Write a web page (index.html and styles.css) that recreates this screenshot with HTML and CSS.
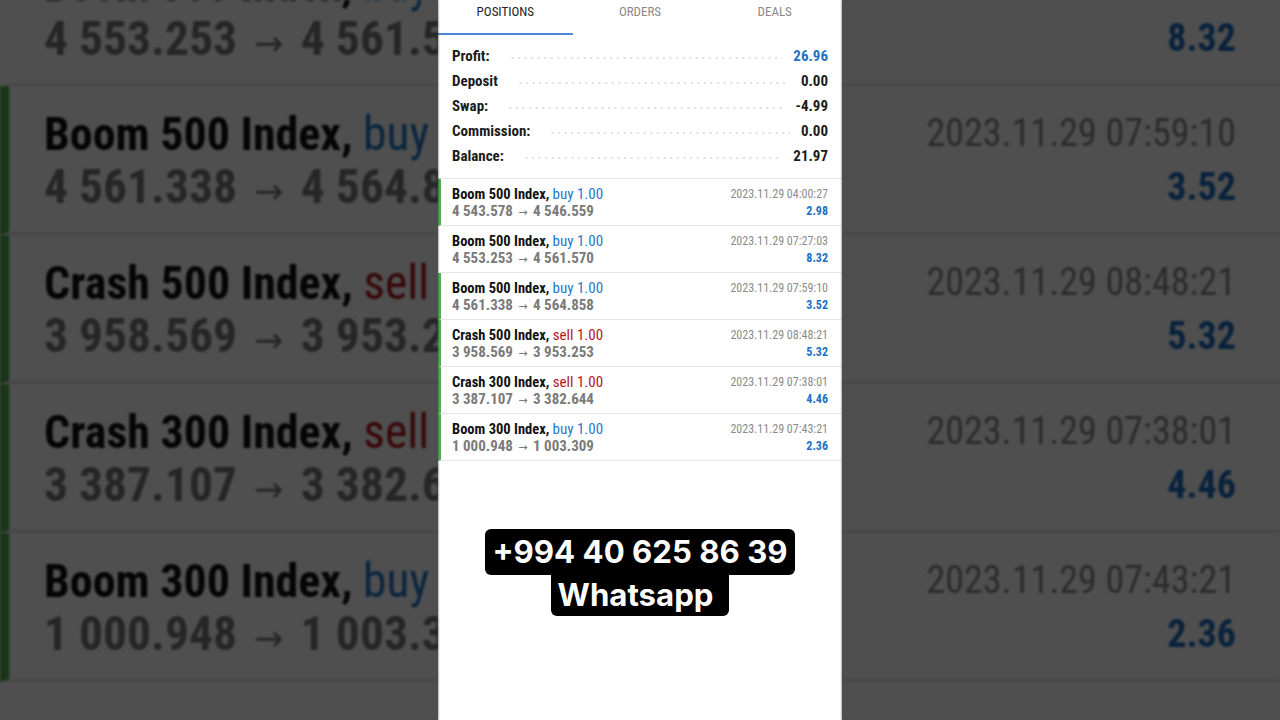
FILE: index.html
```html
<!DOCTYPE html>
<html lang="en">
<head>
<meta charset="utf-8">
<title>Positions</title>
<link rel="stylesheet" href="styles.css">
</head>
<body>
<div class="stage">
  <div class="side side-left" aria-hidden="true">
    <div class="screen bg-screen">
      <div class="bg-spacer"></div>
      <div class="deal"><div class="left"><div class="title">Boom 500 Index, <span class="buy">buy 1.00</span></div><div class="prices">4 553.253 <span class="arr">→</span> 4 561.570</div></div><div class="right"><div class="date">2023.11.29 07:27:03</div><div class="pl">8.32</div></div></div>
      <div class="deal green"><div class="left"><div class="title">Boom 500 Index, <span class="buy">buy 1.00</span></div><div class="prices">4 561.338 <span class="arr">→</span> 4 564.858</div></div><div class="right"><div class="date">2023.11.29 07:59:10</div><div class="pl">3.52</div></div></div>
      <div class="deal green"><div class="left"><div class="title">Crash 500 Index, <span class="sell">sell 1.00</span></div><div class="prices">3 958.569 <span class="arr">→</span> 3 953.253</div></div><div class="right"><div class="date">2023.11.29 08:48:21</div><div class="pl">5.32</div></div></div>
      <div class="deal green"><div class="left"><div class="title">Crash 300 Index, <span class="sell">sell 1.00</span></div><div class="prices">3 387.107 <span class="arr">→</span> 3 382.644</div></div><div class="right"><div class="date">2023.11.29 07:38:01</div><div class="pl">4.46</div></div></div>
      <div class="deal green"><div class="left"><div class="title">Boom 300 Index, <span class="buy">buy 1.00</span></div><div class="prices">1 000.948 <span class="arr">→</span> 1 003.309</div></div><div class="right"><div class="date">2023.11.29 07:43:21</div><div class="pl">2.36</div></div></div>
    </div>
  </div>

  <div class="screen phone">
    <div class="tabs">
      <div class="tab active">Positions</div>
      <div class="tab">Orders</div>
      <div class="tab">Deals</div>
    </div>
    <div class="summary">
      <div class="sum-row"><span>Profit:</span><span class="leader"></span><span class="blue">26.96</span></div>
      <div class="sum-row"><span>Deposit</span><span class="leader"></span><span>0.00</span></div>
      <div class="sum-row"><span>Swap:</span><span class="leader"></span><span>-4.99</span></div>
      <div class="sum-row"><span>Commission:</span><span class="leader"></span><span>0.00</span></div>
      <div class="sum-row"><span>Balance:</span><span class="leader"></span><span>21.97</span></div>
    </div>
    <div class="deal green"><div class="left"><div class="title">Boom 500 Index, <span class="buy">buy 1.00</span></div><div class="prices">4 543.578 <span class="arr">→</span> 4 546.559</div></div><div class="right"><div class="date">2023.11.29 04:00:27</div><div class="pl">2.98</div></div></div>
    <div class="deal"><div class="left"><div class="title">Boom 500 Index, <span class="buy">buy 1.00</span></div><div class="prices">4 553.253 <span class="arr">→</span> 4 561.570</div></div><div class="right"><div class="date">2023.11.29 07:27:03</div><div class="pl">8.32</div></div></div>
    <div class="deal green"><div class="left"><div class="title">Boom 500 Index, <span class="buy">buy 1.00</span></div><div class="prices">4 561.338 <span class="arr">→</span> 4 564.858</div></div><div class="right"><div class="date">2023.11.29 07:59:10</div><div class="pl">3.52</div></div></div>
    <div class="deal green"><div class="left"><div class="title">Crash 500 Index, <span class="sell">sell 1.00</span></div><div class="prices">3 958.569 <span class="arr">→</span> 3 953.253</div></div><div class="right"><div class="date">2023.11.29 08:48:21</div><div class="pl">5.32</div></div></div>
    <div class="deal green"><div class="left"><div class="title">Crash 300 Index, <span class="sell">sell 1.00</span></div><div class="prices">3 387.107 <span class="arr">→</span> 3 382.644</div></div><div class="right"><div class="date">2023.11.29 07:38:01</div><div class="pl">4.46</div></div></div>
    <div class="deal green"><div class="left"><div class="title">Boom 300 Index, <span class="buy">buy 1.00</span></div><div class="prices">1 000.948 <span class="arr">→</span> 1 003.309</div></div><div class="right"><div class="date">2023.11.29 07:43:21</div><div class="pl">2.36</div></div></div>

    <div class="caption">
      <div class="cap1">+994 40 625 86 39</div>
      <div class="cap2">Whatsapp</div>
    </div>
  </div>

  <div class="side side-right" aria-hidden="true">
    <div class="screen bg-screen">
      <div class="bg-spacer"></div>
      <div class="deal"><div class="left"><div class="title">Boom 500 Index, <span class="buy">buy 1.00</span></div><div class="prices">4 553.253 <span class="arr">→</span> 4 561.570</div></div><div class="right"><div class="date">2023.11.29 07:27:03</div><div class="pl">8.32</div></div></div>
      <div class="deal green"><div class="left"><div class="title">Boom 500 Index, <span class="buy">buy 1.00</span></div><div class="prices">4 561.338 <span class="arr">→</span> 4 564.858</div></div><div class="right"><div class="date">2023.11.29 07:59:10</div><div class="pl">3.52</div></div></div>
      <div class="deal green"><div class="left"><div class="title">Crash 500 Index, <span class="sell">sell 1.00</span></div><div class="prices">3 958.569 <span class="arr">→</span> 3 953.253</div></div><div class="right"><div class="date">2023.11.29 08:48:21</div><div class="pl">5.32</div></div></div>
      <div class="deal green"><div class="left"><div class="title">Crash 300 Index, <span class="sell">sell 1.00</span></div><div class="prices">3 387.107 <span class="arr">→</span> 3 382.644</div></div><div class="right"><div class="date">2023.11.29 07:38:01</div><div class="pl">4.46</div></div></div>
      <div class="deal green"><div class="left"><div class="title">Boom 300 Index, <span class="buy">buy 1.00</span></div><div class="prices">1 000.948 <span class="arr">→</span> 1 003.309</div></div><div class="right"><div class="date">2023.11.29 07:43:21</div><div class="pl">2.36</div></div></div>
    </div>
  </div>
</div>
</body>
</html>
```
FILE: styles.css
```css
* { box-sizing: border-box; margin: 0; padding: 0; }
html, body { width: 1280px; height: 720px; overflow: hidden; }
body { background: #4f4f4f; font-family: "Roboto Condensed", Roboto, "Liberation Sans", sans-serif; }

.stage { display: flex; width: 1280px; height: 720px; overflow: hidden; }

.side { flex: none; width: 438px; height: 720px; overflow: hidden; background: #fff; filter: brightness(0.31) blur(1px); }
.bg-screen { transform: translateY(2px) scale(3.17); transform-origin: 202px 360px; }
.side-left .bg-screen { margin-left: 438px; }
.side-right .bg-screen { margin-left: -404px; }
.bg-spacer { flex: none; height: 226px; border-bottom: 1px solid #e6e6e6; }

.screen { flex: none; width: 404px; height: 720px; background: #fff; display: flex; flex-direction: column; }

.tabs { display: flex; height: 35px; flex: none; }
.tab { flex: 1; text-align: center; font-size: 13px; line-height: 23px; color: #8a8a8a; text-transform: uppercase; }
.tab.active { color: #222; border-bottom: 2px solid #4d88d6; }

.summary { flex: none; padding: 8px 14px 10px; border-bottom: 1px solid #e3e3e3; }
.sum-row { display: flex; height: 25px; align-items: center; font-size: 15px; font-weight: 700; color: #1b1b1b; }
.leader { flex: 1; align-self: stretch; margin: 0 11px 0 19px; background-image: radial-gradient(circle, #d6d6d6 0.8px, transparent 1.2px); background-size: 6.6px 4px; background-repeat: repeat-x; background-position: 0 13px; }
.blue { color: #1f72c4; }

.deal { flex: none; display: flex; justify-content: space-between; height: 47px; padding: 7px 14px 0 11px; border-left: 3px solid transparent; border-bottom: 1px solid #e6e6e6; }
.deal.green { border-left-color: #4caf50; }
.title { font-weight: 700; font-size: 14.5px; line-height: 17px; color: #111; }
.buy { color: #1f78c8; font-weight: 400; font-size: 15px; }
.sell { color: #b5151b; font-weight: 400; font-size: 15px; }
.prices { font-weight: 700; font-size: 15px; line-height: 17px; color: #7a7a7a; }
.arr { display: inline-block; margin: 0 2px; font-size: 11px; font-family: "DejaVu Sans", sans-serif; font-weight: 400; }
.right { text-align: right; }
.date { font-size: 12px; line-height: 17px; color: #8b8b8b; }
.pl { font-size: 12px; font-weight: 700; line-height: 17px; color: #1e6fc2; }

.caption { flex: none; margin-top: 68px; display: flex; flex-direction: column; align-items: center; color: #fff; font-family: Inter, Roboto, sans-serif; font-weight: 700; font-size: 31.2px; }
.cap1 { background: #000; border-radius: 6px; height: 46px; line-height: 46px; padding: 0 7px; }
.cap2 { background: #000; border-radius: 0 0 6px 6px; height: 41px; line-height: 40px; padding: 0 16px 0 7px; }
```
